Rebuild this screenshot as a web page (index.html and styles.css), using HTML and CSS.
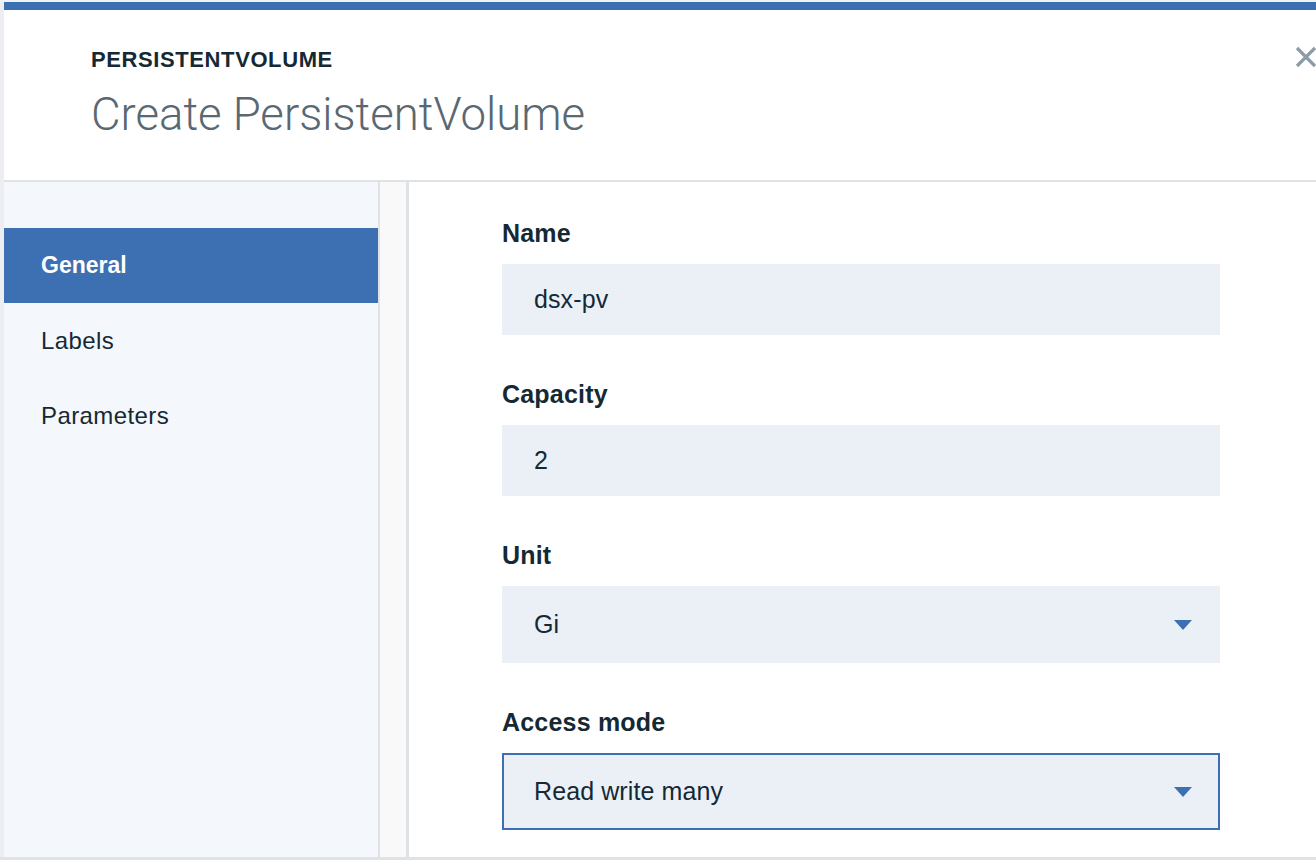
FILE: index.html
```html
<!DOCTYPE html>
<html>
<head>
<meta charset="utf-8">
<link rel="stylesheet" href="styles.css">
</head>
<body>
<div class="stage">
  <div class="behind"></div>
  <div class="panel">
    <header class="head">
      <div class="eyebrow">PERSISTENTVOLUME</div>
      <h1 class="title">Create PersistentVolume</h1>
      <button class="close" aria-label="Close">
        <svg width="24" height="24" viewBox="0 0 24 24"><path d="M3 3 L21 21 M21 3 L3 21" stroke="#8c9ba5" stroke-width="3.2" fill="none"/></svg>
      </button>
    </header>
    <div class="body">
      <nav class="side">
        <div class="item active">General</div>
        <div class="item">Labels</div>
        <div class="item">Parameters</div>
      </nav>
      <div class="track"></div>
      <main class="form">
        <div class="field">
          <label class="label">Name</label>
          <div class="input">dsx-pv</div>
        </div>
        <div class="field">
          <label class="label">Capacity</label>
          <div class="input">2</div>
        </div>
        <div class="field">
          <label class="label">Unit</label>
          <div class="input select"><span>Gi</span><svg class="caret" width="18" height="10" viewBox="0 0 18 10"><path d="M0 0 H18 L9 10 Z" fill="#3d70b2"/></svg></div>
        </div>
        <div class="field">
          <label class="label">Access mode</label>
          <div class="input select focus"><span>Read write many</span><svg class="caret" width="18" height="10" viewBox="0 0 18 10"><path d="M0 0 H18 L9 10 Z" fill="#3d70b2"/></svg></div>
        </div>
      </main>
    </div>
  </div>
</div>
<div class="bottom-line"></div>
</body>
</html>
```
FILE: styles.css
```css
* { box-sizing: border-box; }
html, body { margin: 0; padding: 0; }
body {
  width: 1316px;
  height: 860px;
  overflow: hidden;
  background: #f3f4f6;
  font-family: "Liberation Sans", Arial, sans-serif;
  color: #152935;
  display: flex;
  flex-direction: column;
}
.stage {
  display: flex;
  height: 857px;
  flex-shrink: 0;
  padding-top: 2px;
  background: #f2f3f5;
}
.behind {
  width: 4px;
  background: #eceef1;
}
.panel {
  flex: 1;
  display: flex;
  flex-direction: column;
  background: #fff;
  border-top: 8px solid #3d70b2;
  position: relative;
  overflow: hidden;
}
.head {
  flex-shrink: 0;
  height: 172px;
  border-bottom: 2px solid #dfe3e6;
  padding: 37px 0 0 87px;
}
.eyebrow {
  font-size: 22px;
  font-weight: 700;
  letter-spacing: 0.6px;
  line-height: 26px;
  color: #152935;
}
.title {
  margin: 15px 0 0 0;
  font-family: Roboto, "Liberation Sans", sans-serif;
  font-weight: 300;
  font-size: 45.5px;
  line-height: 54px;
  color: #5a6872;
}
.close {
  position: absolute;
  top: 35px;
  left: 1290px;
  border: 0;
  background: none;
  padding: 0;
  width: 24px;
  height: 24px;
}
.body {
  flex: 1;
  display: flex;
  min-height: 0;
}
.side {
  width: 376px;
  background: #f4f7fb;
  border-right: 2px solid #dfe3e6;
  padding-top: 46px;
}
.item {
  height: 75px;
  display: flex;
  align-items: center;
  padding-left: 37px;
  font-size: 24px;
  letter-spacing: 0.4px;
  color: #152935;
}
.item.active {
  background: #3d70b2;
  color: #fff;
  font-weight: 700;
  font-size: 23px;
  letter-spacing: 0;
}
.track {
  width: 29px;
  background: #f9f9f9;
  border-right: 3px solid #dfe3e6;
}
.form {
  flex: 1;
  padding: 36px 96px 0 93px;
}
.field { margin-bottom: 44px; }
.label {
  display: block;
  font-size: 25px;
  font-weight: 700;
  letter-spacing: 0.2px;
  line-height: 30px;
  margin-bottom: 16px;
  color: #152935;
}
.input {
  height: 71px;
  background: #ebf0f7;
  display: flex;
  align-items: center;
  padding: 0 28px 0 32px;
  font-size: 25px;
  letter-spacing: 0.1px;
  color: #152935;
}
.select {
  height: 77px;
  justify-content: space-between;
}
.select.focus {
  border: 2px solid #3d70b2;
  padding-left: 30px;
  padding-right: 26px;
}
.caret { display: block; }
.bottom-line {
  height: 3px;
  background: #dfe3e6;
}
```
